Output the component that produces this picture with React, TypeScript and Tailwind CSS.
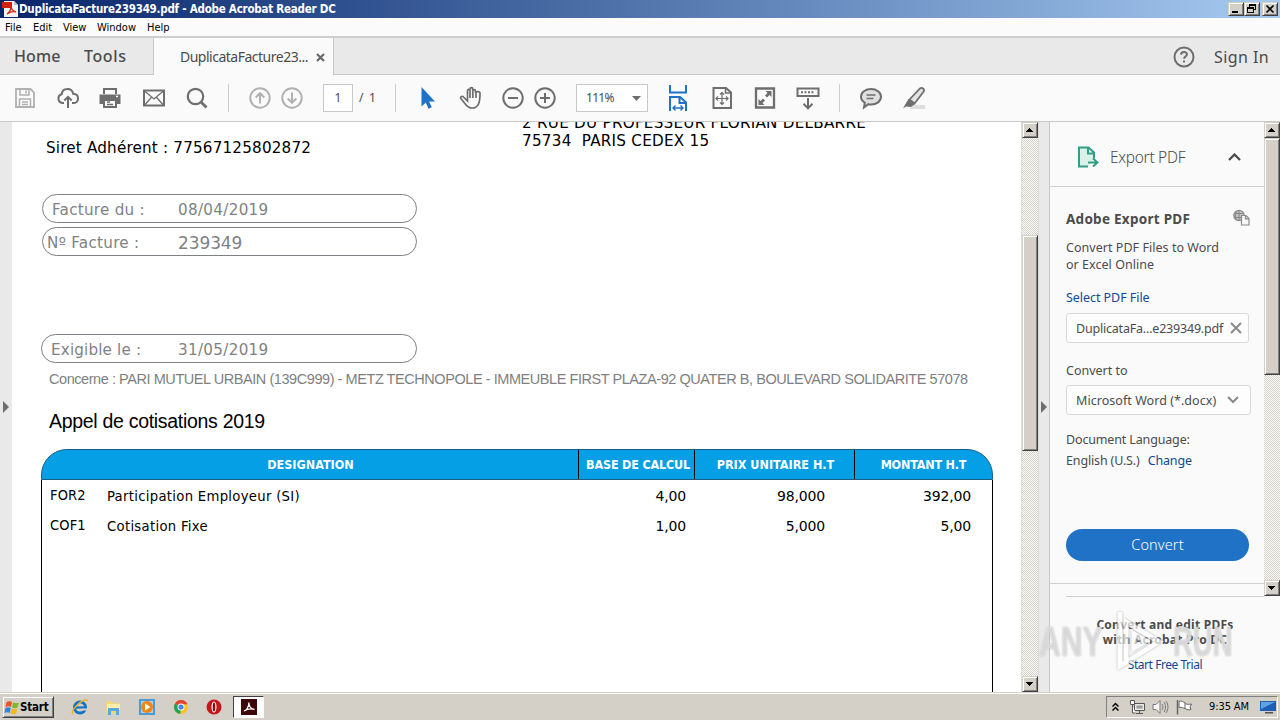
import type { ReactNode } from "react";

const RAISED =
  "border border-t-[#d4d0c8] border-l-[#d4d0c8] border-r-[#404040] border-b-[#404040] shadow-[inset_1px_1px_0_#fff,inset_-1px_-1px_0_#808080] bg-[#d4d0c8]";
const TAHOMA = "font-['DejaVu_Sans_Condensed','DejaVu_Sans',sans-serif] [font-stretch:condensed]";
const VERDANA = "font-['DejaVu_Sans',sans-serif]";
const CLEAN = "font-['Noto_Sans',sans-serif]";
const ARIAL = "font-['Liberation_Sans',sans-serif]";

function Icon({ children, className = "" }: { children: ReactNode; className?: string }) {
  return (
    <svg viewBox="0 0 24 24" width="24" height="24" fill="none" stroke="#6e6e6e" strokeWidth="2" className={`shrink-0 ${className}`}>
      {children}
    </svg>
  );
}

function Sep({ className }: { className: string }) {
  return <div className={`h-7 w-px shrink-0 bg-[#cdcdcd] ${className}`} />;
}

function ScrollButton({ up }: { up?: boolean }) {
  return (
    <div className={`flex h-4 w-4 shrink-0 items-center justify-center ${RAISED}`}>
      <svg width="8" height="4" viewBox="0 0 8 4" shapeRendering="crispEdges">
        <path d={up ? "M0 4h7L3.5 0z" : "M0 0h7L3.5 4z"} fill="#000" />
      </svg>
    </div>
  );
}

function ScrollBar({ offset, thumb, className }: { offset: string; thumb: string; className: string }) {
  return (
    <div className={`flex w-4 shrink-0 flex-col bg-[repeating-conic-gradient(#fff_0_25%,#d4d0c8_0_50%)] bg-[length:2px_2px] ${className}`}>
      <ScrollButton up />
      <div className={`w-4 shrink-0 ${RAISED} ${offset} ${thumb}`} />
      <div className="flex-1" />
      <ScrollButton />
    </div>
  );
}

function TitleBar() {
  return (
    <div className="flex h-[18px] shrink-0 items-center bg-linear-to-r from-[#0a246a] to-[#a6caf0] pl-[2px]">
      <svg width="16" height="16" viewBox="0 0 16 16" className="shrink-0">
        <path d="M2 0h10l4 4v12H2z" fill="#f4f4f4" />
        <path d="M12 0v4h4z" fill="#bdbdbd" />
        <path d="M0 1h10v6H0z" fill="#d6200f" />
        <path d="M5 13c3-2 4-5 4-8 0 4 2 5 5 6-3-1-6 0-9 2z" fill="none" stroke="#d6200f" strokeWidth="1.2" />
      </svg>
      <span className={`ml-px w-[330px] whitespace-nowrap text-[11.5px] leading-[17px] font-bold tracking-[-0.23px] text-white ${TAHOMA}`}>
        DuplicataFacture239349.pdf - Adobe Acrobat Reader DC
      </span>
      <div className="flex-1" />
      <div className="mr-[2px] flex">
        <div className={`h-[14px] w-4 ${RAISED}`}>
          <svg width="14" height="12" viewBox="0 0 14 12" shapeRendering="crispEdges"><path d="M3 8h6v2H3z" fill="#000" /></svg>
        </div>
        <div className={`h-[14px] w-4 ${RAISED}`}>
          <svg width="14" height="12" viewBox="0 0 14 12" shapeRendering="crispEdges">
            <path d="M4 1h7v6H9V6h1V3H5v1H4zM2 4h7v6H2zM3 6v3h5V6z" fill="#000" fillRule="evenodd" />
          </svg>
        </div>
        <div className={`ml-[2px] h-[14px] w-4 ${RAISED}`}>
          <svg width="14" height="12" viewBox="0 0 14 12"><path d="M3.5 2.5l7 7M10.500 2.500l-7 7" stroke="#000" strokeWidth="1.7" /></svg>
        </div>
      </div>
    </div>
  );
}

function MenuBar() {
  return (
    <div className={`flex h-5 shrink-0 items-center border-b-2 border-[#cecece] bg-[#fbfbfb] pl-[5px] pt-[3px] text-[11px] text-black ${TAHOMA}`}>
      <span className="w-7">File</span>
      <span className="w-[30px]">Edit</span>
      <span className="w-[34px]">View</span>
      <span className="w-[50px]">Window</span>
      <span>Help</span>
    </div>
  );
}

function Tabs() {
  return (
    <div className={`flex h-[37px] shrink-0 bg-[#fafafa] text-[#4b4b4b] ${CLEAN}`}>
      <div className="flex w-[154px] items-center border-r border-b border-[#c8c8c8] bg-[#e9e9e9] pl-[14px] text-[16px] font-medium">
        <span className="w-[70px] tracking-[0.1px]">Home</span>
        <span className="tracking-[0.6px]">Tools</span>
      </div>
      <div className="flex w-[179px] items-center pl-[26px]">
        <span className="w-[135px] whitespace-nowrap text-[14px] tracking-[-0.5px]">DuplicataFacture23...</span>
        <svg width="9" height="9" viewBox="0 0 9 9" className="mt-px ml-px"><path d="M1 1l7 7M8 1l-7 7" stroke="#6a6a6a" strokeWidth="2.2" /></svg>
      </div>
      <div className="flex flex-1 items-center justify-end border-b border-l border-[#c8c8c8] bg-[#e9e9e9] pr-[11px]">
        <svg width="22" height="22" viewBox="0 0 22 22" fill="none" stroke="#6e6e6e" strokeWidth="2" className="mt-px">
          <circle cx="11" cy="11" r="9.500" />
          <path d="M8 8.600c.3-3.400 6.200-3.200 6-.1-.1 1.900-2.800 1.900-2.900 4.200" />
          <path d="M11 14.500v2" />
        </svg>
        <span className="mt-px ml-[19px] whitespace-nowrap text-[16px] tracking-[0.4px]">Sign In</span>
      </div>
    </div>
  );
}

function Toolbar() {
  return (
    <div className={`flex h-[47px] shrink-0 items-center border-b border-[#c8c8c8] bg-[#fafafa] pl-[13px] ${CLEAN}`}>
      <Icon>
        <g stroke="#b1b1b1" strokeWidth="1.800">
          <path d="M3 3h14.500L21 6.500V21H3z" />
          <path d="M7 3v6h9V3M6.500 21v-8h11v8M13 4.500v3M9 16h6M9 18.500h6" strokeWidth="1.500" />
        </g>
      </Icon>
      <Icon className="ml-[19px]">
        <path d="M8 17H6.500A4.500 4.500 0 0 1 5.700 8.200C6 4.800 8.600 3 11.500 3s5.200 1.900 5.700 4.800c3 .1 4.800 2 4.800 4.600S20 17 17.500 17H16" />
        <path d="M12 22V11M8.300 14.500L12 10.800l3.700 3.700" />
      </Icon>
      <Icon className="ml-[18px]">
        <path d="M6 8V3h12v5" strokeWidth="2" />
        <path d="M1.500 8.500h21V18H19v-4H5v4H1.500z" fill="#6e6e6e" stroke="none" />
        <path d="M6 14v7h12v-7z" fill="#fafafa" />
        <path d="M9 16h3M9 18.500h6" strokeWidth="1.300" />
        <path d="M18 10.500h2" stroke="#fafafa" strokeWidth="1.500" />
      </Icon>
      <Icon className="ml-[20px]">
        <path d="M2 4.500h20v15H2z" />
        <path d="M2.500 5l9.500 8 9.500-8M2.500 19.300l7-8M21.500 19.300l-7-8" strokeWidth="1.300" />
      </Icon>
      <Icon className="ml-[19px]">
        <circle cx="10.500" cy="10.500" r="7.700" strokeWidth="2.200" />
        <path d="M16 16l5.500 5.500" strokeWidth="2.800" />
      </Icon>
      <Sep className="ml-[19px]" />
      <Icon className="ml-[19px]">
        <g stroke="#b1b1b1"><circle cx="12" cy="12" r="9.700" /><path d="M12 17.500V7.500M7.700 11.500L12 7.200l4.300 4.300" /></g>
      </Icon>
      <Icon className="ml-2">
        <g stroke="#b1b1b1"><circle cx="12" cy="12" r="9.700" /><path d="M12 6.500v10M7.700 12.500l4.300 4.300 4.300-4.300" /></g>
      </Icon>
      <div className="ml-[19px] flex h-7 w-[30px] shrink-0 items-center justify-center border border-[#c8c8c8] bg-white text-[12px] text-[#4b4b4b]">1</div>
      <span className="ml-[6px] w-5 shrink-0 whitespace-pre text-[12px] tracking-[1.2px] text-[#4b4b4b]">/ 1</span>
      <Sep className="ml-[16px]" />
      <Icon className="ml-[19px]"><path d="M6.500 1v19.500l4.300-4 2.700 6.300 3.300-1.500-2.700-5.900h5.900z" fill="#1f72c6" stroke="none" /></Icon>
      <Icon className="ml-[20px]">
        <path d="M8.500 12.500V4.800c0-2 2.500-2 2.500 0V3.200c0-2 2.800-2 2.800 0V5c0-2 2.700-1.900 2.700 0v2c0-2 4.500-2 4.500.3 0 5-.3 8.500-1.700 11-1.300 2.500-3.300 3.700-6 3.700-3.300 0-5-1.200-6.800-3.800L1.900 12.500c-1-1.500 1.200-3 2.600-1.500L8.500 15V6M11 4.500V12M13.800 4.500V12M17 6.500V12" strokeWidth="1.700" />
      </Icon>
      <Icon className="ml-[18px]"><circle cx="12" cy="12" r="9.700" /><path d="M7 12h10" /></Icon>
      <Icon className="ml-2"><circle cx="12" cy="12" r="9.700" /><path d="M7 12h10M12 7v10" /></Icon>
      <div className="ml-[19px] flex h-7 w-[72px] shrink-0 items-center justify-between border border-[#c8c8c8] bg-white pr-[6px] pl-[9px] text-[12px] tracking-[-0.7px] text-[#4b4b4b]">
        111%
        <svg width="9" height="5" viewBox="0 0 9 5"><path d="M0 0h9L4.500 5z" fill="#6e6e6e" /></svg>
      </div>
      <svg width="24" height="26" viewBox="0 0 24 26" fill="none" stroke="#1f72c6" strokeWidth="2" className="ml-[18px] shrink-0">
        <path d="M4 0v7.500h16V0M4 26V12h10l6 5.500V26M13.500 12v6H20" />
        <path d="M7 23h10M9.500 20.500L7 23l2.500 2.500M14.500 20.500L17 23l-2.500 2.500" strokeWidth="1.400" />
      </svg>
      <Icon className="ml-[20px]">
        <path d="M3.500 2h12.500l5 4.500V22H3.500z" />
        <path d="M15.500 2v5H21" strokeWidth="1.500" />
        <path d="M12 7v11M6.500 12.500h11M10 8.500l2-2 2 2M10 16.500l2 2 2-2M8 10.500l-2 2 2 2M16 10.500l2 2-2 2" strokeWidth="1.200" />
      </Icon>
      <Icon className="ml-[19px]">
        <path d="M3 2.500h18v19H3z" strokeWidth="2.300" />
        <path d="M12.500 5H18.500v6l-2-2-2.500 2.500-2-2L14.500 7zM11.500 19H5.500v-6l2 2L10 12.500l2 2L9.500 17z" fill="#6e6e6e" stroke="none" />
      </Icon>
      <Icon className="ml-[19px]">
        <path d="M1.500 2.500h21V10h-21z" />
        <path d="M5 6.300h14" strokeDasharray="2 1.500" />
        <path d="M12 12v10M7.500 17.800l4.500 4.500 4.500-4.500" />
      </Icon>
      <Sep className="ml-[19px]" />
      <Icon className="ml-[19px]">
        <path d="M12 3c5.500 0 10 3.300 10 7.800s-4.500 7.700-10 7.700c-1 0-1.900-.1-2.700-.3L5 21.500l.8-4.800C3.500 15.300 2 13.200 2 10.800 2 6.300 6.500 3 12 3z" fill="#e0e0e0" />
        <path d="M7.500 9h9M7.500 12.500h7" strokeWidth="1.600" />
      </Icon>
      <Icon className="ml-[19px]">
        <path d="M11 19h12v4H7z" fill="#dedede" stroke="none" />
        <path d="M7.500 13.500L18 2.500c2-1.500 5 .7 3.700 3L12.500 17.500z" fill="#e4e4e4" strokeWidth="1.800" />
        <path d="M6.500 13l6.500 5-4 3-5-.5-3 2 2.500-4.500z" fill="#6e6e6e" stroke="none" />
      </Icon>
    </div>
  );
}

function Pill({ label, value, className = "", valueClass = "tracking-[0.3px]" }: { label: string; value: string; className?: string; valueClass?: string }) {
  return (
    <div className={`flex h-[29px] items-center rounded-full border border-[#7d8084] pt-[3px] text-[15.200px] text-[#7f8285] ${className}`}>
      <span className="shrink-0 whitespace-nowrap">{label}</span>
      <span className="flex-1" />
      <span className={`w-[238px] shrink-0 whitespace-nowrap ${valueClass}`}>{value}</span>
    </div>
  );
}

function Row({ cells }: { cells: string[] }) {
  return (
    <div className="flex h-[30px] items-center text-[14px] text-black">
      <span className={`w-[57px] pl-px text-[14.500px] tracking-[0.15px] ${TAHOMA}`}>{cells[0]}</span>
      <span className={`w-[471px] pl-px text-[14.700px] tracking-[0.3px] ${TAHOMA}`}>{cells[1]}</span>
      <span className="w-[109px] text-right tracking-[-0.15px]">{cells[2]}</span>
      <span className="w-[139px] text-right tracking-[-0.15px]">{cells[3]}</span>
      <span className="w-[146px] text-right tracking-[-0.15px]">{cells[4]}</span>
    </div>
  );
}

function Invoice() {
  return (
    <div className={`flex w-[1009px] shrink-0 flex-col overflow-hidden bg-white text-black ${VERDANA}`}>
      <div className="flex h-[72px] shrink-0 pl-[34px] text-[15.200px] leading-[18px]">
        <div className="w-[476px] pt-[17px] tracking-[0.18px]">Siret Adhérent : 77567125802872</div>
        <div className="-mt-2 whitespace-pre tracking-[0.25px]">{"2 RUE DU PROFESSEUR FLORIAN DELBARRE\n75734  PARIS CEDEX 15"}</div>
      </div>
      <Pill label="Facture du :" value="08/04/2019" className="ml-[30px] w-[375px] shrink-0 pl-[9px] tracking-[0.25px]" />
      <Pill label="Nº Facture :" value="239349" className="mt-1 ml-[30px] w-[375px] shrink-0 pl-1 tracking-[0.28px]" valueClass="text-[17px] pt-[2px] tracking-[-0.1px]" />
      <Pill label="Exigible le :" value="31/05/2019" className="mt-[78px] ml-[29px] w-[376px] shrink-0 pl-[9px] tracking-[0.15px]" />
      <div className={`mt-[6px] ml-[37px] h-5 shrink-0 whitespace-nowrap text-[14.500px] leading-5 tracking-[-0.44px] text-[#7f7f7f] ${ARIAL}`}>
        Concerne : PARI MUTUEL URBAIN (139C999) - METZ TECHNOPOLE - IMMEUBLE FIRST PLAZA-92 QUATER B, BOULEVARD SOLIDARITE 57078
      </div>
      <div className={`mt-[20px] ml-[37px] h-6 shrink-0 text-[19.500px] leading-6 tracking-[-0.3px] ${ARIAL}`}>Appel de cotisations 2019</div>
      <div className="mt-4 ml-[29px] flex w-[952px] flex-1 flex-col">
        <div className={`flex h-[31px] shrink-0 overflow-hidden rounded-t-[26px] border border-[#1b5f86] bg-[#049fe4] text-center text-[12.500px] leading-[30px] font-bold whitespace-nowrap text-white ${TAHOMA}`}>
          <span className="w-[536px] pl-px">DESIGNATION</span>
          <span className="-my-px w-[117px] border border-black pl-[3px] tracking-[-0.2px]">BASE DE CALCUL</span>
          <span className="-my-px w-[160px] border border-l-0 border-black pl-[2px]">PRIX UNITAIRE H.T</span>
          <span className="flex-1 tracking-[-0.2px]">MONTANT H.T</span>
        </div>
        <div className="flex-1 border-r border-l border-black pt-px pl-[7px]">
          <Row cells={["FOR2", "Participation Employeur (SI)", "4,00", "98,000", "392,00"]} />
          <Row cells={["COF1", "Cotisation Fixe", "1,00", "5,000", "5,00"]} />
        </div>
      </div>
    </div>
  );
}

function Rail({ className }: { className: string }) {
  return (
    <div className={`flex shrink-0 items-center bg-[#e9e9e9] ${className}`}>
      <svg width="6" height="12" viewBox="0 0 6 12"><path d="M0 0l6 6-6 6z" fill="#6e6e6e" /></svg>
    </div>
  );
}

function ExportPanel() {
  return (
    <div className={`relative flex flex-1 flex-col bg-[#fafafa] text-[#4b4b4b] ${CLEAN}`}>
      <div className="flex h-[474px] shrink-0">
        <div className="flex w-[214px] shrink-0 flex-col text-[12.500px]">
          <div className="flex h-[65px] shrink-0 items-center border-b border-[#d0d0d0] pt-[6px] pl-[27px]">
            <svg width="22" height="22" viewBox="0 0 22 22" fill="none" stroke="#2fa084" strokeWidth="2">
              <path d="M11 20.500H2V1.500h9.500l5.500 5v6M11 2v5.500h6" fill="#dcf0ea" />
              <path d="M11 16.500h8M16 12.500l4.500 4-4.500 4" fill="none" />
            </svg>
            <span className="mt-px ml-[11px] w-[118px] text-[15.500px] font-light tracking-[-0.3px]">Export PDF</span>
            <svg width="13" height="8" viewBox="0 0 13 8" fill="none" stroke="#4b4b4b" strokeWidth="2.300"><path d="M1 7l5.500-5.500L12 7" /></svg>
          </div>
          <div className="flex h-[50px] shrink-0 items-center pt-[14px] pl-4">
            <span className="w-[167px] text-[13.500px] font-bold tracking-[0.27px]">Adobe Export PDF</span>
            <svg width="17" height="17" viewBox="0 0 17 17" fill="none" stroke="#8a8a8a" strokeWidth="1.200" className="-mt-1">
              <circle cx="6" cy="6.500" r="5.200" fill="#c4c4c4" />
              <path d="M1 4.500h10M1 8.500h10M6 1v11M3.500 2c-1.500 3-1.500 6 0 9" />
              <path d="M8.500 6.500h4.500l3 3v6.500H8.500z" fill="#fafafa" />
              <path d="M12.500 6.500v3.300H16" />
            </svg>
          </div>
          <div className="mt-[2px] ml-4 h-[34px] shrink-0 leading-[17px] tracking-[0.04px]">Convert PDF Files to Word<br />or Excel Online</div>
          <div className="mt-4 ml-4 h-[18px] shrink-0 leading-[18px] tracking-[-0.05px] text-[#10498f]">Select PDF File</div>
          <div className="mt-[6px] ml-4 flex h-[30px] w-[183px] shrink-0 items-center justify-between rounded-[3px] border border-[#dadada] bg-[#fdfdfd] pr-[6px] pl-[9px] whitespace-nowrap">
            <span className="mt-[2px] tracking-[-0.2px]">DuplicataFa...e239349.pdf</span>
            <svg width="12" height="12" viewBox="0 0 12 12" stroke="#8a8a8a" strokeWidth="2"><path d="M1 1l10 10M11 1L1 11" /></svg>
          </div>
          <div className="mt-[19px] ml-4 h-[18px] shrink-0 leading-[18px]">Convert to</div>
          <div className="mt-[5px] ml-4 flex h-[30px] w-[185px] shrink-0 items-center justify-between rounded-[3px] border border-[#dadada] bg-[#fdfdfd] pr-[11px] pl-[9px] whitespace-nowrap">
            <span className="mt-[3px] tracking-[0.05px]">Microsoft Word (*.docx)</span>
            <svg width="12" height="8" viewBox="0 0 12 8" fill="none" stroke="#8a8a8a" strokeWidth="2"><path d="M1 1l5 5 5-5" /></svg>
          </div>
          <div className="mt-[14px] ml-4 h-[43px] shrink-0 leading-[21px] tracking-[-0.15px]">
            Document Language:<br />English (U.S.)<span className="ml-[8px]">
              <span className="text-[#10498f]">Change</span>
            </span>
          </div>
          <div className="mt-[57px] ml-4 flex h-8 w-[183px] shrink-0 items-center justify-center rounded-full bg-[#1f72c6] text-[14.500px] font-light tracking-[0.1px] text-white">Convert</div>
          <div className="mt-[22px] h-px shrink-0 bg-[#d0d0d0]" />
          <div className="mt-3 ml-4 h-px shrink-0 bg-[#d0d0d0]" />
        </div>
        <ScrollBar offset="mt-0" thumb="h-[237px]" className="h-[474px]" />
      </div>
      <div className="flex flex-col items-center pt-[21px] text-center text-[12px]">
        <div className="h-[30px] leading-[15px] font-bold tracking-[0.25px] whitespace-nowrap">Convert and edit PDFs<br />with Acrobat Pro DC</div>
        <div className="mt-[9px] leading-[18px] tracking-[-0.45px] text-[#10498f]">Start Free Trial</div>
      </div>
      <div className={`absolute top-[488px] -left-[11px] flex items-center text-[43px] leading-[60px] font-bold text-white/50 [text-shadow:0_0_2px_#b0b0b0] ${ARIAL}`}>
        <span className="w-[68px] origin-left scale-x-[0.7]">ANY</span>
        <svg width="66" height="62" viewBox="0 0 66 62" fill="none" stroke="#fff" strokeWidth="5" opacity="0.700" className="drop-shadow-[0_0_1px_#909090]">
          <path d="M13 2v54l6-3.500V12l33 19.500L13 56M27 24v14l12-7z" />
        </svg>
        <span className="w-[66px] origin-left scale-x-[0.640]">RUN</span>
      </div>
    </div>
  );
}

function Taskbar() {
  return (
    <div className={`flex h-7 shrink-0 items-center border-t border-[#d4d0c8] bg-[#d4d0c8] pt-[1px] pl-[2px] text-black shadow-[inset_0_1px_0_#fff] ${TAHOMA}`}>
      <div className={`flex h-[22px] w-[52px] shrink-0 items-center pl-px ${RAISED}`}>
        <svg width="16" height="15" viewBox="0 0 15 15" className="shrink-0">
          <path d="M2 2c2-1 4-1 5.500 0L6.500 7C5 6 3 6 1 7z" fill="#e8532a" />
          <path d="M8.500 2.500c2 1 4 1 6 0L13 7.500c-2 1-4 .8-5.500 0z" fill="#7db928" />
          <path d="M.8 8c2-1 4-1 5.500 0l-1 5C4 12 2 12 0 13z" fill="#2f87dd" />
          <path d="M7.300 8.500c2 1 4 1 5.700 0l-1.300 5c-2 1-4 .8-5.500 0z" fill="#f5b81c" />
        </svg>
        <span className="mt-px text-[11.500px] font-bold tracking-[-0.2px]">Start</span>
      </div>
      <svg width="18" height="18" viewBox="0 0 18 18" className="ml-[17px] shrink-0">
        <circle cx="9" cy="9.500" r="5.500" fill="none" stroke="#1673c4" strokeWidth="3" />
        <path d="M5 9.500h9" stroke="#1673c4" strokeWidth="2.200" />
        <path d="M11 11.500h5" stroke="#d4d0c8" strokeWidth="2" />
        <path d="M2 16C-1 12 13-1 17 3" fill="none" stroke="#e6b422" strokeWidth="1.600" />
      </svg>
      <svg width="18" height="18" viewBox="0 0 18 18" className="ml-[15px] shrink-0">
        <path d="M2 3h6l1 2h7v11H2z" fill="#f1d678" />
        <path d="M3 6h13v6H3z" fill="#f9edb1" />
        <path d="M4 10h11v7h-3v-4H7v4H4z" fill="#58abd8" />
      </svg>
      <svg width="18" height="18" viewBox="0 0 18 18" className="ml-[16px] shrink-0">
        <path d="M1 1h16v16H1z" fill="#4d9ad8" />
        <path d="M3 3h12v12H3z" fill="#a8d3f2" />
        <circle cx="9" cy="9" r="6" fill="#f08519" />
        <path d="M7 5.500v7L12.500 9z" fill="#fff" />
      </svg>
      <svg width="16" height="16" viewBox="0 0 16 16" className="ml-[17px] shrink-0">
        <circle cx="8" cy="8" r="7" fill="#f7c61c" />
        <path d="M8 8L2 4.400A7 7 0 0 1 14.500 5.200H8z" fill="#df4434" />
        <path d="M8 8l-.8 7A7 7 0 0 1 2 4.400z" fill="#26a052" />
        <circle cx="8" cy="8" r="3.500" fill="#fff" />
        <circle cx="8" cy="8" r="2.600" fill="#4a84e8" />
      </svg>
      <svg width="16" height="16" viewBox="0 0 16 16" className="ml-[17px] shrink-0">
        <circle cx="8" cy="8" r="7.500" fill="#c4161c" />
        <ellipse cx="8" cy="8" rx="2.500" ry="5.500" fill="#fff" />
        <ellipse cx="8" cy="8" rx="1.300" ry="4.500" fill="#8b0b10" />
      </svg>
      <div className="ml-[11px] flex h-[22px] w-[31px] shrink-0 items-center justify-center border border-t-[#404040] border-r-white border-b-white border-l-[#404040] bg-white">
        <svg width="16" height="16" viewBox="0 0 16 16">
          <path d="M0 0h16v16H0z" fill="#3b0708" />
          <path d="M3 12c3-1 5-5 4.800-8.500C8 7 10 10 13.500 10.300 10 9.500 6 10 3 12z" fill="none" stroke="#fff" strokeWidth="1.200" />
        </svg>
      </div>
      <div className="flex-1" />
      <div className="mr-[2px] flex h-[22px] w-[172px] shrink-0 items-center border border-t-[#808080] border-r-white border-b-white border-l-[#808080] pl-[5px]">
        <svg width="7" height="10" viewBox="0 0 7 10" fill="none" stroke="#000" strokeWidth="1.500"><path d="M.5 4.500l3-3 3 3M.5 8.500l3-3 3 3" /></svg>
        <svg width="17" height="16" viewBox="0 0 17 16" fill="none" stroke="#555" className="ml-[10px]">
          <path d="M5.500 4.500h10v7h-10z" fill="#e8e8e8" /><path d="M7.500 6.500h6v3h-6z" fill="#999" stroke="none" />
          <path d="M10.500 12v2M7 14.500h7" /><path d="M1.500 1.500h4v4h-4zM3.500 6v8h3" fill="#fff" />
        </svg>
        <svg width="17" height="16" viewBox="0 0 17 16" fill="none" stroke="#777" className="ml-[6px]">
          <path d="M1 5.500h3l4-4v13l-4-4H1z" fill="#f4f4f4" /><path d="M10 5c1.200 2 1.200 4 0 6M12 3c2 3 2 7 0 10M14 2c2.600 4 2.600 8 0 12" />
        </svg>
        <svg width="17" height="16" viewBox="0 0 17 16" fill="none" stroke="#666" className="ml-[7px]">
          <path d="M1.500 1v14.500" strokeWidth="1.500" /><path d="M3 2.500c3-1.500 4 1 6 1v6c-2 0-3-2-6-1zM9 4.500c2 1 4 1 6.500.5L14 8l1 2.500c-2 .5-4 .5-6-1" fill="#fff" />
        </svg>
        <span className="mt-px ml-[16px] w-[51px] text-[11px] tracking-[-0.1px] whitespace-nowrap">9:35 AM</span>
        <svg width="16" height="14" viewBox="0 0 16 14" className="shrink-0">
          <path d="M0 1h16v10H0z" fill="#1d5fb4" /><path d="M1 2h14L1 9z" fill="#5fa3e4" /><path d="M5 12h8v1.500H5z" fill="#555" />
        </svg>
      </div>
    </div>
  );
}

export default function App() {
  return (
    <div className="flex h-[720px] w-[1280px] flex-col overflow-hidden bg-white">
      <TitleBar />
      <MenuBar />
      <Tabs />
      <Toolbar />
      <div className="flex h-[570px] shrink-0">
        <Rail className="w-3 pl-[3px]" />
        <Invoice />
        <ScrollBar offset="mt-[97px]" thumb="h-[216px]" className="box-content h-[570px] border-r border-l border-[#dcdcdc]" />
        <Rail className="w-[11px] border-r border-[#c8c8c8] pl-[2px]" />
        <ExportPanel />
      </div>
      <Taskbar />
    </div>
  );
}
